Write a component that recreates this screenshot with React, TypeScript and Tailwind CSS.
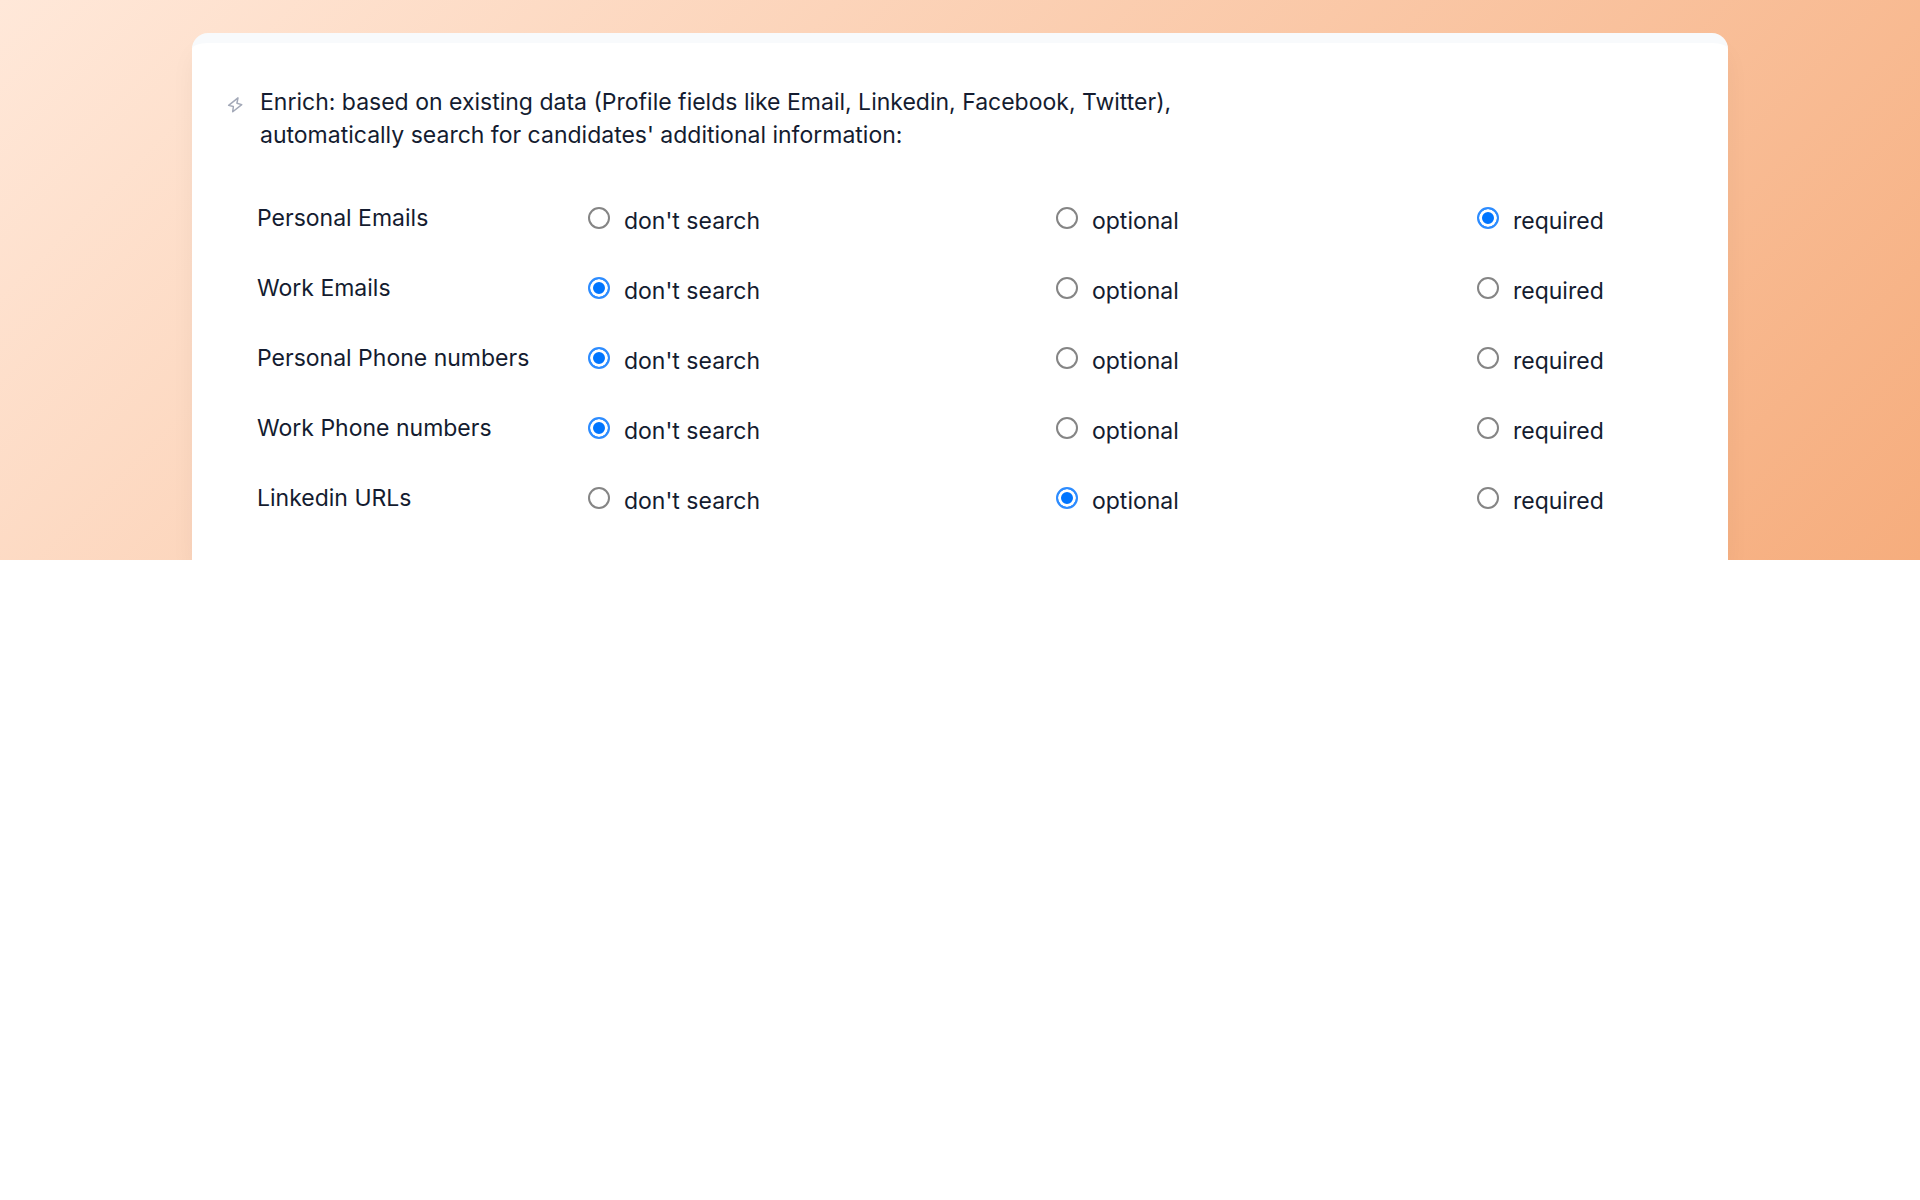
import React, { useState } from 'react';

type Level = "don't search" | 'optional' | 'required';

const levels: Level[] = ["don't search", 'optional', 'required'];

const initialSettings: Record<string, Level> = {
  'Personal Emails': 'required',
  'Work Emails': "don't search",
  'Personal Phone numbers': "don't search",
  'Work Phone numbers': "don't search",
  'Linkedin URLs': 'optional',
};

type EnrichRowProps = {
  field: string;
  value: Level;
  onChange: (value: Level) => void;
};

const EnrichRow: React.FC<EnrichRowProps> = ({ field, value, onChange }) => (
  <div
    role="radiogroup"
    aria-label={field}
    className="grid grid-cols-[331fr_468fr_421fr_187fr] items-start"
  >
    <span>{field}</span>
    {levels.map((level) => (
      <label key={level} className="flex items-start gap-3.5">
        <input
          type="radio"
          name={field}
          value={level}
          checked={value === level}
          onChange={() => onChange(level)}
          className="mt-[5px] size-[22px] shrink-0 appearance-none rounded-full border-2 border-[#858585] bg-white checked:border-[#2d8cff] checked:bg-[#0075ff] checked:shadow-[inset_0_0_0_3px_#fff]"
        />
        <span className="mt-[3px]">{level}</span>
      </label>
    ))}
  </div>
);

const App: React.FC = () => {
  const [settings, setSettings] = useState(initialSettings);

  return (
    <div className="min-h-screen bg-white font-['Inter',sans-serif] text-[23px] leading-[33px] text-[#141c30]">
      <section className="overflow-hidden bg-linear-[135deg,#ffe8d9,#f6ad7d] px-[10%] pt-[33px]">
        <div className="overflow-hidden rounded-t-2xl border-t-10 border-slate-50 bg-white pr-16 pb-[42px] pl-[34px] shadow-[0_16px_28px_-4px_rgba(0,0,0,0.06)]">
          <div className="flex items-start gap-4 pt-[43px]">
            <svg
              viewBox="0 0 24 24"
              fill="none"
              stroke="currentColor"
              strokeWidth={2}
              strokeLinecap="round"
              strokeLinejoin="round"
              className="mt-2.5 size-[18px] shrink-0 text-[#a3a9b8]"
              aria-hidden="true"
            >
              <path d="M16 2.5L3.5 12.5L9.8 14L9 21L21 11.5L14.6 9.6z" />
            </svg>
            <p className="max-w-[920px]">
              Enrich: based on existing data (Profile fields like Email, Linkedin, Facebook, Twitter),
              automatically search for candidates' additional information:
            </p>
          </div>

          <form className="mt-[50px] flex flex-col gap-[34px] pl-[31px]">
            {Object.entries(settings).map(([field, value]) => (
              <EnrichRow
                key={field}
                field={field}
                value={value}
                onChange={(next) => setSettings({ ...settings, [field]: next })}
              />
            ))}
          </form>
        </div>
      </section>
    </div>
  );
};

export default App;
